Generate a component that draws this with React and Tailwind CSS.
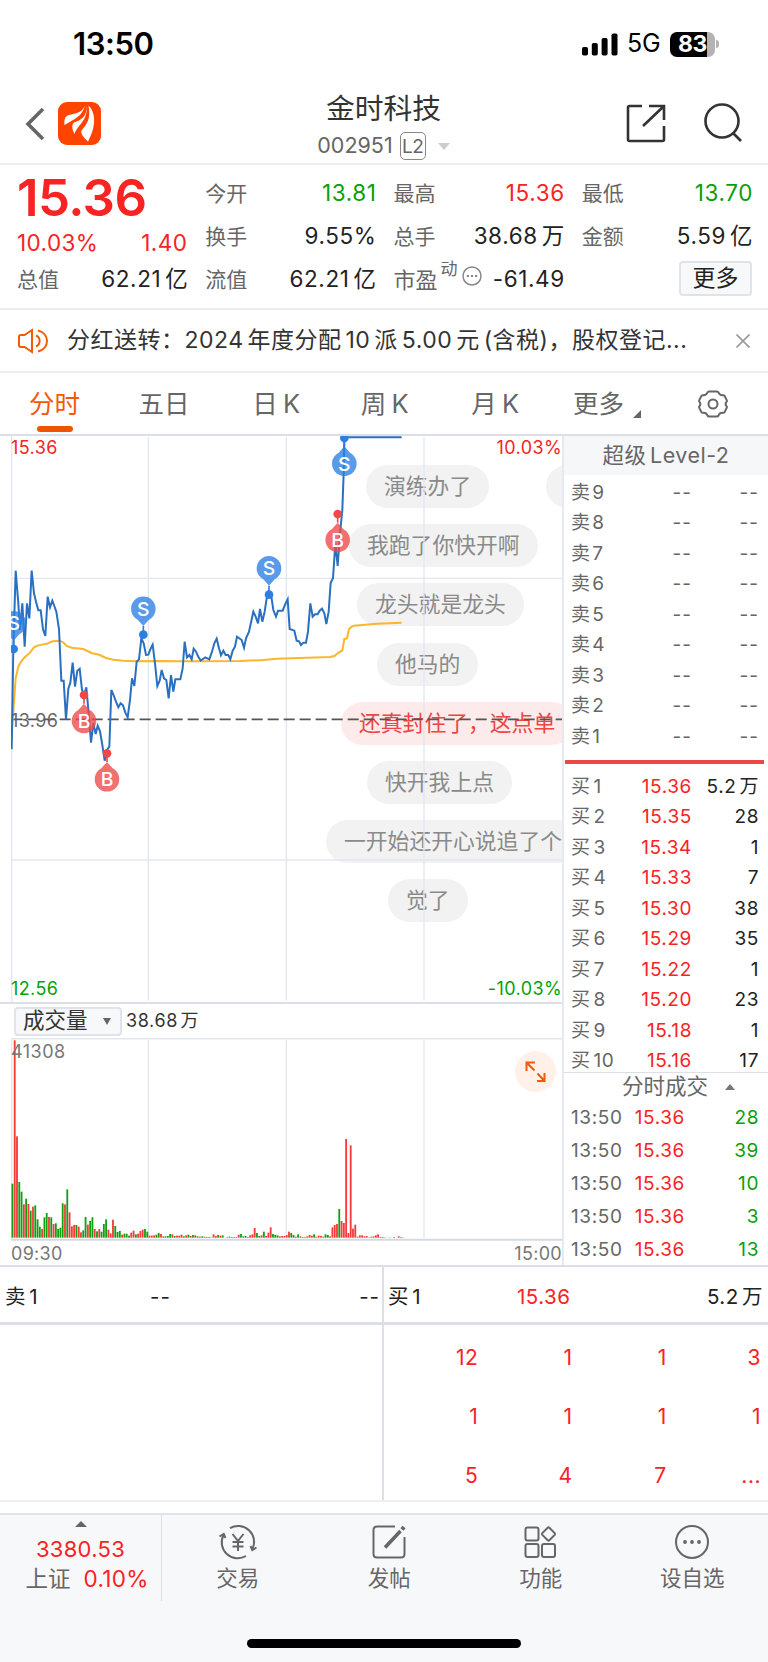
import React from 'react';
import clsx from 'clsx';

// Minute prices and their average, in chart units (3 units = 1px)
const PRICE_LINE =
  '35,958 40,655 47,422 55,520 60,600 67,520 74,650 81,520 88,565 95,422 102,490 108,515 115,541 122,541 129,598 136,618 143,500 150,532 157,512 163,528 169,545 177,597 184,752 191,752 198,868 205,776 211,758 218,698 225,770 232,722 239,716 246,780 252,795 259,772 266,850 273,938 280,880 287,912 293,887 300,904 307,945 314,992 321,960 328,950 334,780 341,796 348,815 355,832 362,820 369,826 376,848 383,862 390,810 396,745 403,768 410,695 417,688 424,625 431,640 438,675 445,674 452,656 458,644 465,700 472,768 479,752 485,720 492,745 499,750 506,805 513,735 520,785 526,748 541,748 548,715 554,635 561,682 568,675 575,688 581,656 588,665 595,680 602,692 609,687 616,682 628,688 636,665 643,640 650,626 657,655 663,676 670,662 677,675 685,675 691,688 698,662 705,650 711,620 725,630 732,653 738,625 747,605 760,545 767,560 774,580 780,537 787,575 794,545 800,505 807,495 814,500 820,540 828,560 834,542 848,542 856,522 863,508 869,597 883,602 890,632 897,634 903,645 910,638 918,638 924,605 931,520 938,560 945,553 953,553 959,542 966,536 973,550 979,582 986,545 992,458 999,445 1006,340 1013,408 1020,310 1027,240 1031,130 1033,22 1205,22';

const AVERAGE_LINE =
  '35,925 38,870 47,745 55,710 62,697 72,684 90,668 102,652 115,646 140,641 158,634 180,632 190,638 200,648 215,653 250,657 275,669 300,675 318,684 340,689 370,692 410,694 480,693 540,694 600,694 720,693 790,690 830,686 900,684 990,681 1003,678 1013,670 1027,661 1033,627 1041,625 1047,597 1055,590 1062,587 1130,581 1205,578';

// One entry per minute: r = rise, g = fall, number = bar height
const VOLUMES =
  'g162 r592 r304 g167 g138 r100 g117 r101 g81 r93 g97 g55 g33 r26 g61 g74 r62 g61 r41 g43 g26 g30 g103 r100 g145 r76 r34 r38 g38 r33 r16 g22 g62 r39 g50 g61 r26 g19 r26 g18 g41 g55 r24 r13 r54 g35 g17 g20 r9 g12 g12 g6 r15 r21 g10 r12 r20 r24 g26 g18 r6 r6 r7 g9 g14 r11 r4 g4 g5 g11 r10 g5 r6 r6 r9 g4 r7 g9 r5 g8 r7 g4 g3 g4 r3 g2 r2 r1 r10 r5 g8 r6 g7 r0 r2 g3 r2 r2 r2 r9 g11 g4 g5 r2 r7 r10 r29 g14 g5 r7 g18 r5 r15 r31 g11 g8 g7 r4 r5 r5 r8 r18 g14 g8 r3 g10 r4 g2 r2 r4 r8 r6 g10 r3 r6 r5 r3 g10 g8 r4 r31 r38 r41 g86 r50 r44 r296 r14 r277 r27 r39 r3 r7 r7 r4 r5 r1 r3 r4 r7 r10 r2 r2 r1 r0 r1 r0 r2 r0 r4 r2 r1'
    .split(' ')
    .map((item) => ({ up: item[0] === 'r', value: Number(item.slice(1)) }));

const MARKERS = [
  { type: 'S', x: 41, y: 580, dot: 657 },
  { type: 'S', x: 430, y: 536, dot: 614 },
  { type: 'S', x: 807, y: 415, dot: 494 },
  { type: 'S', x: 1033, y: 101, dot: 24 },
  { type: 'B', x: 252, y: 873, dot: 795 },
  { type: 'B', x: 321, y: 1048, dot: 970 },
  { type: 'B', x: 1013, y: 330, dot: 252 },
];

const COMMENTS = [
  { text: '演练办了', place: 'left-[366px] top-[29px]' },
  { text: '', place: 'left-[546px] top-[29px] w-[60px]' },
  { text: '我跑了你快开啊', place: 'left-[349px] top-[88px]' },
  { text: '龙头就是龙头', place: 'left-[357px] top-[147px]' },
  { text: '他马的', place: 'left-[377px] top-[207px]' },
  { text: '还真封住了，这点单', place: 'left-[341px] top-[266px]', hot: true },
  { text: '快开我上点', place: 'left-[367px] top-[325px]' },
  { text: '一开始还开心说追了个', place: 'left-[326px] top-[384px]' },
  { text: '觉了', place: 'left-[388px] top-[443px]' },
];

const BUYS = [
  ['1', '15.36', '5.2 万'],
  ['2', '15.35', '28'],
  ['3', '15.34', '1'],
  ['4', '15.33', '7'],
  ['5', '15.30', '38'],
  ['6', '15.29', '35'],
  ['7', '15.22', '1'],
  ['8', '15.20', '23'],
  ['9', '15.18', '1'],
  ['10', '15.16', '17'],
];

const TICKS = ['28', '39', '10', '3', '13'];
const QUEUE = ['12', '1', '1', '3', '1', '1', '1', '1', '5', '4', '7', '...'];

const StatusBar = () => (
  <div className="flex h-[88px] items-center justify-between pl-[73px] pr-[49px]">
    <span className="text-[31px] font-semibold tracking-[-0.4px] text-black">13:50</span>
    <div className="flex items-center">
      <svg width="36" height="23" viewBox="0 0 36 23">
        <rect x="0" y="14" width="6" height="8.5" rx="1.8" />
        <rect x="9.8" y="10" width="6" height="12.5" rx="1.8" />
        <rect x="19.6" y="5" width="6" height="17.5" rx="1.8" />
        <rect x="29.5" y="0.5" width="6" height="22" rx="1.8" />
      </svg>
      <span className="ml-[9px] w-[33px] text-[25px] tracking-[-0.3px] text-black">5G</span>
      <div className="ml-[10px] flex h-[25px] w-[45px] items-center overflow-hidden rounded-[7px] bg-[linear-gradient(90deg,#000_83%,#b3b3b3_83%)]">
        <span className="w-full text-center text-[23px] font-bold leading-none tracking-[-0.5px] text-white">83</span>
      </div>
      <div className="ml-[1px] h-[8px] w-[3px] rounded-r-full bg-[#b3b3b3]" />
    </div>
  </div>
);

const Header = () => (
  <div className="flex h-[77px] items-start justify-between border-b-2 border-[#ececec] pl-[25px] pr-[26px]">
    <div className="flex w-[150px] items-center pt-[14px]">
      <svg width="20" height="34" viewBox="0 0 20 34" fill="none" stroke="#666" strokeWidth="3.600">
        <path d="M18 2 3 17l15 15" />
      </svg>
      <svg className="ml-[13px]" width="43" height="43" viewBox="0 0 43 43">
        <rect width="43" height="43" rx="9" fill="#ff4400" />
        <g fill="#fff">
          <path d="M27 3.500C24 11 17 11.500 11 13c-4 1-5 4-4.500 10C16 17 24 15 27 3.500z" />
          <path d="M28.500 3.500C29 15 23 18 16 20.500c-2.500 2-2 7 .5 11.500C20 22 30 19 28.500 3.500z" />
          <path d="M30.500 3.500C33 17 29 22 23.500 28.500c-1 3 2 7 6.500 11C36 29 40 13 30.500 3.500z" />
        </g>
      </svg>
    </div>
    <div className="flex flex-col items-center">
      <div className="flex h-[42px] items-center text-[28.800px] leading-none text-[#333]">金时科技</div>
      <div className="flex h-[32px] items-center text-[21.500px] leading-none text-[#666]">
        <span>002951</span>
        <span className="ml-[7px] flex h-[28px] w-[26px] items-center justify-center rounded-[5px] border border-[#888] text-[19px] tracking-[-0.5px]">L2</span>
        <span className="ml-[12px] border-x-[6px] border-t-[7px] border-x-transparent border-t-[#ccc]" />
      </div>
    </div>
    <div className="flex w-[150px] items-center justify-end gap-[38px] pt-[15px]">
      <svg width="40" height="40" viewBox="0 0 40 40" fill="none" stroke="#333" strokeWidth="2.600">
        <path d="M16 3H3.500Q2 3 2 4.500v32Q2 38 3.500 38h33q1.500 0 1.500-1.500V23M23 3h15v14M38 3 17 23" />
      </svg>
      <svg width="38" height="40" viewBox="0 0 38 40" fill="none" stroke="#333" strokeWidth="2.600">
        <circle cx="18" cy="18" r="16.500" />
        <path d="m29 30 8 8" />
      </svg>
    </div>
  </div>
);

const Field = ({ label, value, color = 'text-[#222]' }) => (
  <div className="flex h-[43px] items-center justify-between">
    <span className="text-[21px] text-[#666]">{label}</span>
    <span className={clsx('-mr-[1px] text-[22.500px] tracking-[0.6px]', color)}>{value}</span>
  </div>
);

const Quote = () => (
  <div className="grid h-[145px] grid-cols-4 gap-x-[18px] border-b-2 border-[#ececec] pl-[17px] pr-[16px] pt-[7px] leading-none">
    <div>
      <div className="flex h-[50px] items-center text-[51px] font-semibold tracking-[-0.6px] text-[#f82323]">15.36</div>
      <div className="flex h-[36px] items-end justify-between pb-[4px] text-[22.500px] tracking-[0.4px] text-[#f82323]">
        <span>10.03%</span>
        <span>1.40</span>
      </div>
      <Field label="总值" value="62.21 亿" />
    </div>
    <div>
      <Field label="今开" value="13.81" color="text-[#0a9f0a]" />
      <Field label="换手" value="9.55%" />
      <Field label="流值" value="62.21 亿" />
    </div>
    <div>
      <Field label="最高" value="15.36" color="text-[#f82323]" />
      <Field label="总手" value="38.68 万" />
      <div className="flex h-[43px] items-center">
        <span className="text-[22px] text-[#666]">市盈</span>
        <span className="ml-[3px] mb-[20px] text-[17px] text-[#666]">动</span>
        <svg className="ml-[4px] mb-[8px]" width="20" height="20" viewBox="0 0 20 20">
          <circle cx="10" cy="10" r="9" fill="none" stroke="#888" strokeWidth="1.500" />
          <path d="M4.800 9h2.200v2H4.800zM8.900 9h2.200v2H8.900zM13 9h2.200v2H13z" fill="#888" />
        </svg>
        <span className="-mr-[1px] ml-auto text-[22.500px] tracking-[0.6px] text-[#222]">-61.49</span>
      </div>
    </div>
    <div>
      <Field label="最低" value="13.70" color="text-[#0a9f0a]" />
      <Field label="金额" value="5.59 亿" />
      <div className="flex h-[40px] items-center justify-end">
        <button type="button" className="h-[35px] w-[73px] rounded-[4px] border-2 border-[#e1e3ea] bg-[#f7f8fa] text-[23px] leading-none text-[#222]">更多</button>
      </div>
    </div>
  </div>
);

const Notice = () => (
  <div className="flex h-[63px] items-center border-b-2 border-[#ececec] pl-[18px] pr-[18px]">
    <svg width="30" height="26" viewBox="0 0 30 26" fill="none" stroke="#f05a0a" strokeWidth="2">
      <path d="M14 2v22L6.500 19H3q-2 0-2-2V9q0-2 2-2h3.500z" />
      <path d="M18 7.500a6 6 0 0 1 0 11M20 2.500c12 3 12 18 0 21" />
    </svg>
    <span className="ml-[19px] whitespace-nowrap text-[23px] leading-none tracking-[0.5px] text-[#333]">
      分红送转：2024 年度分配 10 派 5.00 元 (含税)，股权登记...
    </span>
    <svg className="ml-auto" width="14" height="14" viewBox="0 0 14 14" stroke="#999" strokeWidth="1.600">
      <path d="m.5.5 13 13M13.500.5l-13 13" />
    </svg>
  </div>
);

const Tabs = () => (
  <div className="flex h-[63px] items-center border-b-2 border-[#dcdfe6] text-[25.500px] leading-none text-[#666]">
    <div className="flex h-full w-[109px] flex-col items-center pt-[18px] text-[#f05a0a]">
      <span>分时</span>
      <span className="mt-[9px] h-[6px] w-[36px] rounded-[3px] bg-[#ee5500]" />
    </div>
    <span className="w-[110px] text-center">五日</span>
    <span className="w-[115px] text-center tracking-[0.5px]">日 K</span>
    <span className="w-[102px] text-center tracking-[0.5px]">周 K</span>
    <span className="w-[119px] text-center tracking-[0.5px]">月 K</span>
    <span className="ml-[18px]">更多</span>
    <span className="ml-[9px] mt-[20px] border-b-[8px] border-l-[8px] border-b-[#666] border-l-transparent" />
    <svg className="ml-auto mr-[40px]" width="30" height="28" viewBox="0 0 30 28" fill="none" stroke="#666" strokeWidth="2">
      <path d="M11 1.500h8q1 0 1.500 1 1.200 3 4.500 2.700 1.200 0 1.700.9l2 4q.5 1-.2 1.800-1.800 2.100 0 4.200.7.800.2 1.800l-2 4q-.5.900-1.700.9-3.300-.3-4.500 2.700-.5 1-1.500 1h-8q-1 0-1.500-1-1.200-3-4.500-2.700-1.200 0-1.700-.9l-2-4q-.5-1 .2-1.800 1.800-2.100 0-4.200-.7-.8-.2-1.800l2-4q.5-.9 1.700-.9 3.300.3 4.500-2.700.5-1 1.500-1z" />
      <circle cx="15" cy="14" r="4.500" />
    </svg>
  </div>
);

const Marker = ({ type, x, y, dot }) => {
  const buy = type === 'B';
  const pointsUp = dot < y;
  const edge = pointsUp ? y - 33 : y + 33;
  const tip = pointsUp ? y - 52 : y + 52;
  return (
    <g>
      <path d={`M${x} ${dot}V${tip}`} stroke={buy ? '#ee4848' : '#2b7fe3'} strokeWidth="5" />
      <g fill={buy ? '#ee4848' : '#2b7fe3'} opacity="0.78">
        <path d={`M${x - 17} ${edge}L${x} ${tip}L${x + 17} ${edge}A37 37 0 1 ${pointsUp ? 1 : 0} ${x - 17} ${edge}z`} />
      </g>
      <circle cx={x} cy={dot} r="13" fill={buy ? '#ee4848' : '#2b7fe3'} />
      <text x={x} y={y + 21} textAnchor="middle" fontSize="58" fontWeight="500" fill="#fff">{type}</text>
    </g>
  );
};

const PriceChart = () => (
  <div className="relative h-[568px] overflow-hidden border-b-2 border-[#dcdfe6] text-[18px] leading-none tracking-[0.4px]">
    {COMMENTS.map((c) => (
      <div
        key={c.place}
        className={clsx(
          'absolute flex h-[43px] items-center whitespace-nowrap rounded-full px-[18px] text-[21.800px] tracking-normal',
          c.place,
          c.hot ? 'bg-[#fdeaea] text-[#ee4444]' : 'bg-[#f2f2f2] text-[#8a8a8a]'
        )}
      >
        {c.text}
      </div>
    ))}
    <svg className="absolute left-0 top-0 tracking-normal" width="562" height="566" viewBox="0 18 1686 1698">
      <clipPath id="plot">
        <rect x="33" y="18" width="1653" height="1698" />
      </clipPath>
      <g stroke="#e2e6f0" strokeWidth="4">
        <path d="M35 18V1716M445 22V1712M859 22V1712M1272 22V1712" />
        <path d="M35 445H1686M35 1290H1686" />
      </g>
      <path d="M35 868H1686" stroke="#555" strokeWidth="5" strokeDasharray="33 15" />
      <g clipPath="url(#plot)">
        <polyline points={AVERAGE_LINE} fill="none" stroke="#fdb52c" strokeWidth="6" />
        <polyline points={PRICE_LINE} fill="none" stroke="#2a70c0" strokeWidth="6" />
        {MARKERS.map((m) => (
          <Marker key={`${m.type}${m.x}`} {...m} />
        ))}
      </g>
    </svg>
    <div className="relative flex h-full flex-col justify-between pl-[11px]">
      <div className="flex justify-between pt-[3px]">
        <span className="text-[#f82323]">15.36</span>
        <span className="text-[#f82323]">10.03%</span>
      </div>
      <span className="pt-[4px] text-[#666]">13.96</span>
      <div className="flex justify-between pb-[4px]">
        <span className="text-[#0a9f0a]">12.56</span>
        <span className="text-[#0a9f0a]">-10.03%</span>
      </div>
    </div>
  </div>
);

const VolumeChart = () => (
  <>
    <div className="flex h-[34px] items-center pl-[14px]">
      <div className="flex h-[29px] w-[108px] items-center justify-between rounded-[4px] border-2 border-[#e1e3ea] bg-[#f7f8fa] pl-[7px] pr-[9px] text-[21.500px] leading-none text-[#333]">
        <span>成交量</span>
        <span className="border-x-[4px] border-t-[7px] border-x-transparent border-t-[#666]" />
      </div>
      <span className="ml-[4px] text-[18px] leading-none tracking-[0.6px] text-[#333]">38.68 万</span>
    </div>
    <div className="relative h-[204px]">
      <svg width="562" height="204" viewBox="0 174 1686 612">
        <path d="M35 176H1686" stroke="#e2e6f0" strokeWidth="5" />
        <path d="M35 176V776M445 181V773M859 181V773M1272 181V773" stroke="#e2e6f0" strokeWidth="4" />
        <path d="M33 779H1686" stroke="#d5d8de" strokeWidth="6" />
        {VOLUMES.map((v, i) => (
          <rect key={i} x={34.500 + i * 6.857} y={773 - v.value} width="5.500" height={v.value} fill={v.up ? '#f83a3a' : '#12a012'} />
        ))}
      </svg>
      <span className="absolute left-[11px] top-[5px] text-[18px] leading-none tracking-[0.5px] text-[#777]">41308</span>
      <div className="absolute left-[515px] top-[13px] flex h-[41px] w-[41px] items-center justify-center rounded-full bg-[#fff0e8]">
        <svg width="21" height="21" viewBox="0 0 21 21" fill="none" stroke="#f05a0a" strokeWidth="2">
          <path d="M1.500 10V1.500H10M1.500 1.500l8 8M19.500 12v8H12M19.500 20l-7-7.500" />
        </svg>
      </div>
    </div>
    <div className="flex h-[24px] items-center justify-between pl-[11px] text-[18px] leading-none tracking-[0.3px] text-[#777]">
      <span>09:30</span>
      <span>15:00</span>
    </div>
  </>
);

const OrderBook = () => (
  <div className="w-[206px] border-l-2 border-[#e6e9f0] leading-none">
    <div className="flex h-[39px] items-center justify-center bg-[#f6f7f9] text-[21.500px] tracking-[0.5px] text-[#666]">超级 Level-2</div>
    <div className="pt-[2px]">
      {[9, 8, 7, 6, 5, 4, 3, 2, 1].map((n) => (
        <div key={n} className="flex h-[30.500px] items-center pl-[7px] pr-[9px] text-[19px] text-[#666]">
          <span className="w-[60px]">卖 {n}</span>
          <span className="flex-1 text-right tracking-[1px]">--</span>
          <span className="w-[67px] text-right tracking-[1px]">--</span>
        </div>
      ))}
    </div>
    <div className="ml-[1px] mr-[4px] mt-[8px] h-[4px] bg-[#ee4545]" />
    <div className="h-[309px] overflow-hidden border-b border-[#dcdfe6] pt-[7.500px]">
      {BUYS.map(([n, price, amount]) => (
        <div key={n} className="flex h-[30.500px] items-center pl-[7px] pr-[9px] text-[19px] tracking-[0.6px]">
          <span className="w-[60px] text-[#666]">买 {n}</span>
          <span className="flex-1 text-right text-[#f82323]">{price}</span>
          <span className="w-[67px] text-right text-[#222]">{amount}</span>
        </div>
      ))}
    </div>
    <div className="flex h-[28px] items-center pl-[58px] text-[21.500px] text-[#666]">
      分时成交
      <span className="ml-[17px] border-x-[5px] border-b-[6px] border-x-transparent border-b-[#777]" />
    </div>
    {TICKS.map((amount) => (
      <div key={amount} className="flex h-[33.200px] items-center pl-[7px] pr-[9px] text-[19px] tracking-[0.6px]">
        <span className="w-[60px] text-[#666]">13:50</span>
        <span className="w-[54px] text-right text-[#f82323]">15.36</span>
        <span className="flex-1 text-right text-[#0a9f0a]">{amount}</span>
      </div>
    ))}
  </div>
);

const Level1 = () => (
  <div className="flex h-[235px] border-b-2 border-[#efefef] text-[20.500px] leading-none tracking-[0.5px] text-[#222]">
    <div className="w-[384px] border-r-2 border-[#dcdfe6]">
      <div className="flex h-[58px] items-center border-b-[3px] border-[#dcdfe6] pl-[5px] pr-[2px] pt-[6px]">
        <span className="w-[145px]">卖 1</span>
        <span className="tracking-[1px]">--</span>
        <span className="ml-auto tracking-[1px]">--</span>
      </div>
    </div>
    <div className="flex-1">
      <div className="flex h-[58px] items-center border-b-[3px] border-[#dcdfe6] pl-[4px] pr-[5px] pt-[6px]">
        <span className="w-[129px]">买 1</span>
        <span className="text-[#f82323]">15.36</span>
        <span className="ml-auto">5.2 万</span>
      </div>
      <div className="grid grid-cols-4 pr-[7px] pt-[3px] text-right text-[21px] text-[#f82323]">
        {QUEUE.map((amount, i) => (
          <span key={i} className="flex h-[59px] items-center justify-end">{amount}</span>
        ))}
      </div>
    </div>
  </div>
);

const TradeIcon = () => (
  <svg width="40" height="36" viewBox="0 0 40 36" fill="none" stroke="#666" strokeWidth="2">
    <path d="M12 4.200A16 16 0 0 1 34.500 25M28 32A16 16 0 0 1 5.500 11" />
    <path d="M1.500 12.500 5.700 10l1.800 4M38.500 23.500 34.300 26l-1.800-4M14.500 10l5.500 7 5.500-7M20 17v10M14.500 18h11M14.500 22.500h11" />
  </svg>
);

const PostIcon = () => (
  <svg width="36" height="36" viewBox="0 0 36 36" fill="none" stroke="#666" strokeWidth="2">
    <path d="M24 2.500H6Q2.500 2.500 2.500 6v24q0 3.500 3.500 3.500h24q3.500 0 3.500-3.500V13" />
    <path d="M14 23.500 29.500 7" strokeWidth="3.500" />
    <path d="m31 5.500 2-2.500" strokeWidth="4" />
  </svg>
);

const GridIcon = () => (
  <svg width="36" height="36" viewBox="0 0 36 36" fill="none" stroke="#666" strokeWidth="2">
    <rect x="2.500" y="3.500" width="13" height="13" rx="2" />
    <rect x="2.500" y="20" width="13" height="13" rx="2" />
    <rect x="19" y="20" width="13" height="13" rx="2" />
    <path d="m24.700 3.700-5.400 5.400q-.8.900 0 1.800l5.400 5.400q.8.800 1.600 0l5.400-5.400q.8-.9 0-1.800l-5.400-5.400q-.8-.8-1.600 0z" />
  </svg>
);

const MoreIcon = () => (
  <svg width="36" height="36" viewBox="0 0 36 36">
    <circle cx="18" cy="18" r="16" fill="none" stroke="#666" strokeWidth="2" />
    <g fill="#666">
      <circle cx="11" cy="18" r="1.900" />
      <circle cx="18" cy="18" r="1.900" />
      <circle cx="25" cy="18" r="1.900" />
    </g>
  </svg>
);

const NAV = [
  { label: '交易', icon: TradeIcon },
  { label: '发帖', icon: PostIcon },
  { label: '功能', icon: GridIcon },
  { label: '设自选', icon: MoreIcon },
];

const Footer = () => (
  <div className="mt-[11px] h-[150px] border-t-2 border-[#e1e3e8] bg-[#f7f8fa] leading-none">
    <div className="flex h-[86px]">
      <div className="flex w-[162px] flex-col items-center border-r border-[#dcdfe6] pt-[6px] text-[22px] tracking-[0.3px] text-[#f82323]">
        <span className="border-x-[6px] border-b-[6px] border-x-transparent border-b-[#666]" />
        <span className="mt-[11px]">3380.53</span>
        <span className="mt-[8px] ml-[13px] flex items-center gap-[13px]">
          <span className="text-[22.500px] tracking-normal text-[#666]">上证</span>
          <span className="text-[22.500px]">0.10%</span>
        </span>
      </div>
      <div className="flex flex-1">
        {NAV.map(({ label, icon: Icon }) => (
          <div key={label} className="flex flex-1 flex-col items-center pt-[9px] text-[21.500px] text-[#666]">
            <Icon />
            <span className="mt-[8px]">{label}</span>
          </div>
        ))}
      </div>
    </div>
    <div className="mx-auto mt-[38px] h-[9px] w-[274px] rounded-full bg-black" />
  </div>
);

export default function App() {
  return (
    <div className="h-[1662px] w-[768px] overflow-hidden bg-white font-['Inter','Noto_Sans_CJK_SC',sans-serif] [word-spacing:-3px]">
      <StatusBar />
      <Header />
      <Quote />
      <Notice />
      <Tabs />
      <div className="flex h-[831px] border-b-2 border-[#dcdfe6]">
        <div className="w-[562px]">
          <PriceChart />
          <VolumeChart />
        </div>
        <OrderBook />
      </div>
      <Level1 />
      <Footer />
    </div>
  );
}
